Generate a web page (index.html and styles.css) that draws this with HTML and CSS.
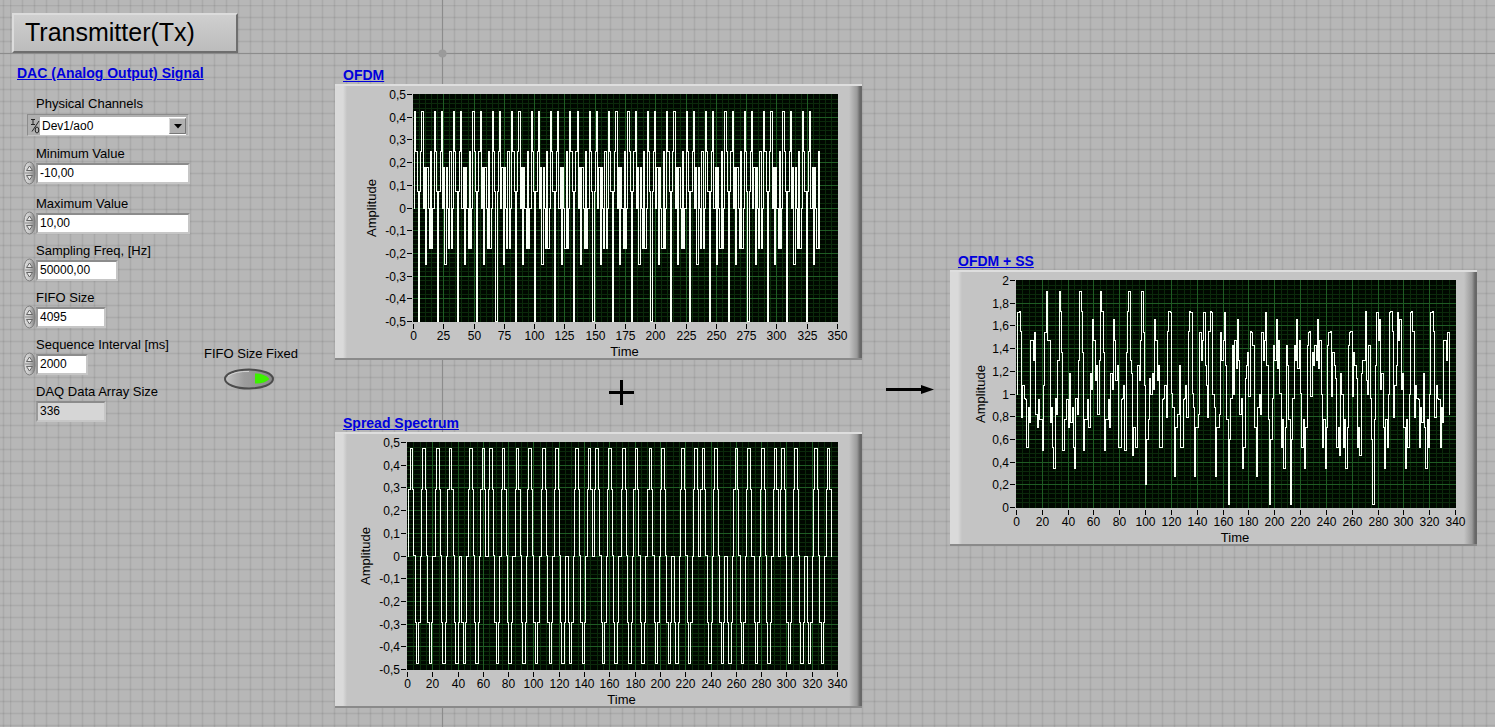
FILE: index.html
```html
<!DOCTYPE html>
<html lang="en">
<head>
<meta charset="utf-8">
<meta name="viewport" content="width=device-width, initial-scale=1">
<title>Transmitter(Tx)</title>
<link rel="stylesheet" href="styles.css">
</head>
<body>
<svg class="origin" viewBox="0 0 9 9" aria-hidden="true"><circle cx="4.500" cy="4.500" r="4" fill="#9a9a9a"/></svg>
<svg class="defs" aria-hidden="true">
  <defs>
    <linearGradient id="metal" x1="0" x2="1" y1="0" y2="0">
      <stop offset="0" stop-color="#e0e0e0"/><stop offset=".5" stop-color="#c6c6c6"/><stop offset="1" stop-color="#7c7c7c"/>
    </linearGradient>
    <linearGradient id="lens" x1="0" x2="1" y1="0" y2="0">
      <stop offset="0" stop-color="#c4c4c4"/><stop offset=".4" stop-color="#9c9c9c"/><stop offset="1" stop-color="#8a8a8a"/>
    </linearGradient>
    <symbol id="spinner" viewBox="0 0 13 24">
      <rect x="1" y="1" width="11" height="22" rx="5.500" ry="9" fill="url(#metal)" stroke="#7c7c7c"/>
      <path d="M2 12h9" stroke="#8c8c8c"/>
      <path d="M6.500 5L9.500 9.500h-6z" fill="#e8e8e8" stroke="#666"/>
      <path d="M3.500 14.500h6l-3 4.500z" fill="#e8e8e8" stroke="#666"/>
    </symbol>
  </defs>
</svg>
<main class="board">
  <section class="controls">
    <h1 class="title">Transmitter(Tx)</h1>
    <h2 class="heading">DAC (Analog Output) Signal</h2>
    <div class="settings">
      <div class="fields">
        <div class="field tall">
          <label for="channel">Physical Channels</label>
          <div class="combo">
            <svg class="io" viewBox="0 0 10 18" aria-hidden="true"><path d="M1 2.500h4M3 2.500v5M1 7.500h4M9 4L2 14.500" fill="none" stroke="#222"/><ellipse cx="7" cy="13" rx="1.800" ry="3" fill="none" stroke="#222"/></svg>
            <select id="channel"><option>Dev1/ao0</option></select>
            <svg class="drop" viewBox="0 0 17 16" aria-hidden="true"><path d="M0 0h17v16H0z" fill="#b0b0b0"/><path d="M.500 15.500V.500h16" fill="none" stroke="#dcdcdc"/><path d="M.500 15.500h16V.500" fill="none" stroke="#777"/><path d="M5 6h8l-4 4.500z" fill="#000"/></svg>
          </div>
        </div>
        <div class="field tall">
          <label for="min">Minimum Value</label>
          <div class="entry"><svg class="spin"><use href="#spinner"/></svg><input id="min" class="w-long" value="-10,00"></div>
        </div>
        <div class="field">
          <label for="max">Maximum Value</label>
          <div class="entry"><svg class="spin"><use href="#spinner"/></svg><input id="max" class="w-long" value="10,00"></div>
        </div>
        <div class="field">
          <label for="freq">Sampling Freq, [Hz]</label>
          <div class="entry"><svg class="spin"><use href="#spinner"/></svg><input id="freq" class="w-mid" value="50000,00"></div>
        </div>
        <div class="field">
          <label for="fifo">FIFO Size</label>
          <div class="entry"><svg class="spin"><use href="#spinner"/></svg><input id="fifo" class="w-small" value="4095"></div>
        </div>
        <div class="field">
          <label for="interval">Sequence Interval [ms]</label>
          <div class="entry"><svg class="spin"><use href="#spinner"/></svg><input id="interval" class="w-tiny" value="2000"></div>
        </div>
        <div class="field">
          <label for="array">DAQ Data Array Size</label>
          <div class="entry"><span class="spin"></span><input id="array" class="w-small" value="336" readonly></div>
        </div>
      </div>
      <div class="switch">
        <label for="fixed">FIFO Size Fixed</label>
        <button id="fixed" class="led" type="button" aria-pressed="true">
          <svg viewBox="0 0 50 22" aria-hidden="true"><ellipse cx="25" cy="11" rx="24" ry="9.500" fill="url(#lens)" stroke="#4c4c4c" stroke-width="2"/><path d="M4 8Q12 3 25 3.500" fill="none" stroke="#d4d4d4"/><path d="M31 5.500Q40 5 45.500 11 40 16 31 15.500z" fill="#3df000"/></svg>
        </button>
      </div>
    </div>
  </section>

  <section class="sources">
    <h2 class="heading">OFDM</h2>
    <div class="panel"><svg class="chart" id="ofdm" role="img" aria-label="OFDM"></svg></div>
    <div class="plus"><svg viewBox="0 0 25 25" aria-hidden="true"><path d="M12.500 0v25M0 12.500h25" stroke="#000" stroke-width="3"/></svg></div>
    <h2 class="heading">Spread Spectrum</h2>
    <div class="panel"><svg class="chart" id="spread" role="img" aria-label="Spread Spectrum"></svg></div>
  </section>

  <div class="arrow"><svg viewBox="0 0 48 11" aria-hidden="true"><path d="M0 5.500h38" stroke="#000" stroke-width="3"/><path d="M35 1l13 4.500L35 10z" fill="#000"/></svg></div>

  <section class="result">
    <h2 class="heading">OFDM + SS</h2>
    <div class="panel"><svg class="chart" id="sum" role="img" aria-label="OFDM + SS"></svg></div>
  </section>
</main>
<script src="charts.js"></script>
</body>
</html>
```
FILE: styles.css
```css
* { box-sizing: border-box; }

body {
  margin: 0;
  min-height: 100vh;
  color: #000;
  font: 13px/18px "Liberation Sans", Arial, sans-serif;
  background:
    linear-gradient(#8c8c8c, #8c8c8c) 442px 0 / 1px 100% no-repeat,
    linear-gradient(#8c8c8c, #8c8c8c) 0 53px / 100% 1px no-repeat,
    repeating-linear-gradient(90deg, #00000012 0 1px, #00000006 1px 2px, #0000 2px 11px, #00000006 11px 12px) 10px 0,
    repeating-linear-gradient(#00000012 0 1px, #00000006 1px 2px, #0000 2px 11px, #00000006 11px 12px) 0 5px,
    #b7b7b7;
}

.origin { position: absolute; left: 438px; top: 49px; width: 9px; height: 9px; }
.defs { position: absolute; width: 0; height: 0; }

.board {
  display: grid;
  grid-template-columns: 335px minmax(0, 1fr) 88px minmax(0, 1fr);
  padding-right: 18px;
}

.title {
  width: 226px;
  margin: 13px 0 0 12px;
  padding: 2px 0 3px 11px;
  border: 2px solid;
  border-color: #dcdcdc #6e6e6e #6e6e6e #dcdcdc;
  background: linear-gradient(#cfcfcf, #bcbcbc);
  font-size: 25px;
  font-weight: 400;
  line-height: 31px;
}

.heading {
  margin: 0;
  padding-left: 8px;
  color: #00d;
  font-size: 14px;
  font-weight: 700;
  line-height: 18px;
  text-decoration: underline;
}
.controls .heading { margin: 11px 0 13px; padding-left: 17px; }

.settings { display: flex; padding-left: 23px; }
.fields { width: 181px; }
.field { height: 47px; }
.field.tall { height: 50px; }
.field label { display: block; padding-left: 13px; }

.entry { display: flex; align-items: center; height: 20px; }
.spin { width: 13px; height: 24px; flex: none; }

input, select {
  height: 21px;
  margin: 0;
  padding: 0 2px;
  border: 2px solid;
  border-color: #8c8c8c #c6c6c6 #c6c6c6 #9a9a9a;
  border-radius: 0;
  background: #fff;
  color: #000;
  font: 12px/16px "Liberation Sans", Arial, sans-serif;
}
input[readonly] { background: #d6d6d6; }
.w-long { width: 154px; }
.w-mid { width: 82px; }
.w-small { width: 70px; }
.w-tiny { width: 52px; }

.combo {
  position: relative;
  display: flex;
  width: 162px;
  height: 22px;
  margin: 1px 0 0 4px;
  padding: 2px;
  border: 1px solid;
  border-color: #8c8c8c #c6c6c6 #c6c6c6 #8c8c8c;
  background: #b0b0b0;
}
.combo select { flex: 1; height: 18px; border: 0; appearance: none; }
.io { width: 10px; height: 18px; }
.drop { position: absolute; right: 2px; top: 3px; width: 17px; height: 16px; pointer-events: none; }

.switch { padding-top: 250px; white-space: nowrap; }
.switch label { display: block; }
.led { display: block; width: 50px; height: 22px; margin: 5px 0 0 20px; padding: 0; border: 0; background: none; }
.led svg { display: block; }

.sources { padding-top: 66px; }
.result { padding-top: 252px; }

.panel {
  border-top: 2px solid #dedede;
  border-bottom: 2px solid #8a8a8a;
  background: linear-gradient(90deg, #dadada 0 8px, #c4c4c4 12px calc(100% - 13px), #9a9a9a calc(100% - 5px), #686868 calc(100% - 2px));
}
.chart {
  display: block;
  width: 100%;
  height: 272px;
  overflow: visible;
  font: 12px "Liberation Sans", Arial, sans-serif;
}
.chart .ticks { stroke: #000; shape-rendering: crispEdges; }
.chart .minor { stroke: #0b2a0b; shape-rendering: crispEdges; }
.chart .major { stroke: #1f5c24; shape-rendering: crispEdges; }
.chart .wave { fill: none; stroke: #f8fff5; shape-rendering: crispEdges; }
.chart .plot { fill: #000800; }
.chart .ylabels { text-anchor: end; }
.chart .xlabels, .chart .name { text-anchor: middle; }
.chart .name { font-size: 13px; }

.plus { display: flex; justify-content: center; height: 54px; padding: 20px 0 0 46px; }
.plus svg { width: 25px; height: 25px; }
.arrow { padding: 384px 0 0 24px; }
.arrow svg { display: block; width: 48px; height: 11px; }
```
FILE: charts.js
```js
const SAMPLES = 336;

// One OFDM symbol lasts 16 samples.
const a = 0.25, b = a / Math.SQRT2;
const symbol = [0, a + b, a, a - b, -0.5, a - b, a, a + b, 0, b, -a, b, 0, -b, a, -b];

// Each chip spans 21 samples: two carrier cycles and a closing zero.
const chips = [1, 1, -1, 1, 1, 1, -1, 1, 1, 1, -1, 1, -1, -1, 1, -1];

const ofdm = [], spread = [], sum = [];
for (let n = 0; n < SAMPLES; n++) {
  const k = n % 21;
  ofdm.push(symbol[n % 16]);
  spread.push(k === 20 ? 0 : chips[Math.floor(n / 21)] * 0.5 * Math.sin(Math.PI * k / 5));
  sum.push(1 + ofdm[n] + spread[n]);
}

const charts = [
  { id: "ofdm", data: ofdm, left: 78, right: 24, nameX: 41, xMax: 350, xStep: 25, yMin: -0.5, yMax: 0.5, yStep: 0.1 },
  { id: "spread", data: spread, left: 72, right: 24, nameX: 35, xMax: 340, xStep: 20, yMin: -0.5, yMax: 0.5, yStep: 0.1 },
  { id: "sum", data: sum, left: 66, right: 21, nameX: 35, xMax: 340, xStep: 20, yMin: 0, yMax: 2, yStep: 0.2 }
];

const TOP = 8, HEIGHT = 228;

function draw(c) {
  const svg = document.getElementById(c.id);
  const x0 = c.left, x1 = Math.round(svg.clientWidth) - c.right;
  const y1 = TOP + HEIGHT;
  const X = v => x0 + Math.round(v * (x1 - x0 - 1) / c.xMax) + 0.5;
  const Y = v => TOP + Math.round((c.yMax - v) * (HEIGHT - 1) / (c.yMax - c.yMin)) + 0.5;
  let minor = "", major = "", ticks = "", xl = "", yl = "";

  for (let v = 0; v <= c.xMax; v += 5) {
    const line = `M${X(v)} ${TOP}V${y1}`;
    if (v % c.xStep) { minor += line; continue; }
    if (v > 0 && v < c.xMax) major += line;
    ticks += `M${X(v)} ${y1 + 2}v5`;
    xl += `<text x="${X(v)}" y="${y1 + 18}">${v}</text>`;
  }
  for (let i = 0; i <= 50; i++) {
    const v = c.yMin + i * c.yStep / 5;
    const line = `M${x0} ${Y(v)}H${x1}`;
    if (i % 5) { minor += line; continue; }
    if (i > 0 && i < 50) major += line;
    ticks += `M${x0 - 6} ${Y(v)}h5`;
    const text = String(Math.round(v * 10) / 10).replace(".", ",");
    yl += `<text x="${x0 - 7}" y="${Y(v) + 4}">${text}</text>`;
  }
  let wave = `M${X(0)} ${Y(c.data[0])}`;
  c.data.forEach((v, n) => { wave += `H${X(n)}V${Y(v)}`; });
  wave += `H${X(c.data.length - 1)}`;

  svg.innerHTML =
    `<rect class="plot" x="${x0}" y="${TOP}" width="${x1 - x0}" height="${HEIGHT}"/>` +
    `<path class="minor" d="${minor}"/><path class="major" d="${major}"/>` +
    `<path class="wave" d="${wave}"/><path class="ticks" d="${ticks}"/>` +
    `<g class="xlabels">${xl}</g><g class="ylabels">${yl}</g>` +
    `<text class="name" x="${(x0 + x1) / 2 - 1}" y="${y1 + 34}">Time</text>` +
    `<text class="name" transform="translate(${c.nameX} ${TOP + HEIGHT / 2}) rotate(-90)">Amplitude</text>`;
}

function drawAll() { charts.forEach(draw); }
drawAll();
window.addEventListener("resize", drawAll);
```
